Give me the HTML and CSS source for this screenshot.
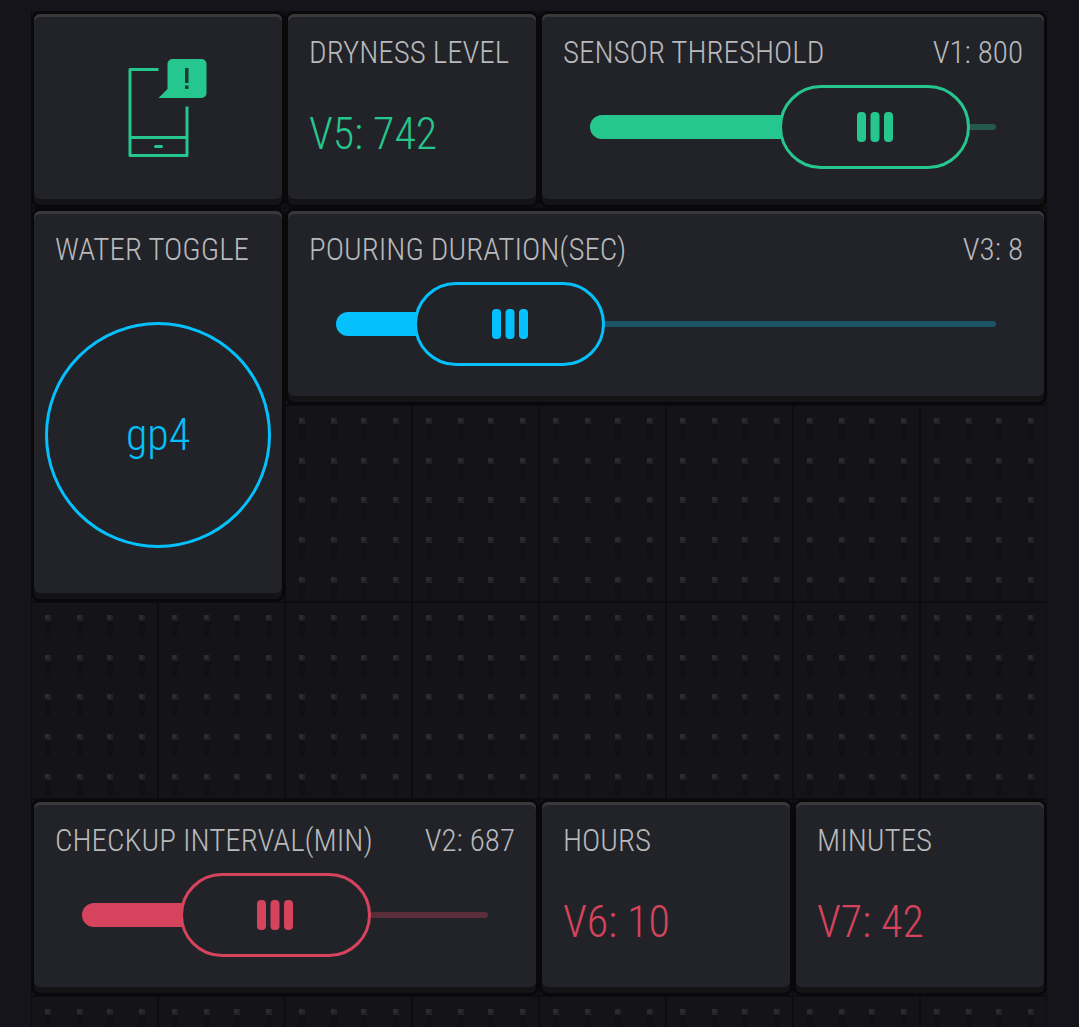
FILE: index.html
```html
<!DOCTYPE html>
<html lang="en">
<head>
<meta charset="utf-8">
<meta name="viewport" content="width=device-width, initial-scale=1">
<title>Plant watering</title>
<link rel="stylesheet" href="styles.css">
</head>
<body>
<main class="board">
  <section class="card card-icon green span-2">
    <svg class="notify-icon" viewBox="0 0 100 100" role="img" aria-label="Notification">
      <g fill="none" stroke="currentColor" stroke-width="3" stroke-linejoin="round">
        <path d="M50.500 12.500H22V98.500H79V49.500"/>
        <path d="M22 80.500H79"/>
        <path d="M47.500 89.500H53.500" stroke-linecap="round"/>
      </g>
      <path fill="currentColor" d="M64.500 2H93.500a5 5 0 0 1 5 5V36a5 5 0 0 1-5 5H50.500L59.500 32V7a5 5 0 0 1 5-5z"/>
      <path class="notify-mark" d="M77 11h3.500v15h-3.500zM77 28.500h3.500v3.500h-3.500z"/>
    </svg>
  </section>

  <section class="card green span-2">
    <header class="card-head"><h2 class="title">DRYNESS LEVEL</h2></header>
    <p class="value">V5: 742</p>
  </section>

  <section class="card green span-4">
    <header class="card-head">
      <label class="title" for="threshold">SENSOR THRESHOLD</label>
      <output class="reading" for="threshold">V1: 800</output>
    </header>
    <div class="slider">
      <span class="slider-fill" style="width: 88%"></span>
      <input class="slider-input" id="threshold" type="range" min="0" max="910" value="800">
    </div>
  </section>

  <section class="card blue span-2 tall">
    <header class="card-head"><h2 class="title">WATER TOGGLE</h2></header>
    <button class="round-button" type="button">gp4</button>
  </section>

  <section class="card blue span-6">
    <header class="card-head">
      <label class="title" for="duration">POURING DURATION(SEC)</label>
      <output class="reading" for="duration">V3: 8</output>
    </header>
    <div class="slider">
      <span class="slider-fill" style="width: 17%"></span>
      <input class="slider-input" id="duration" type="range" min="0" max="48" value="8">
    </div>
  </section>

  <section class="card red span-4 last-row">
    <header class="card-head">
      <label class="title" for="interval">CHECKUP INTERVAL(MIN)</label>
      <output class="reading" for="interval">V2: 687</output>
    </header>
    <div class="slider">
      <span class="slider-fill" style="width: 46%"></span>
      <input class="slider-input" id="interval" type="range" min="0" max="1510" value="687">
    </div>
  </section>

  <section class="card red span-2 last-row">
    <header class="card-head"><h2 class="title">HOURS</h2></header>
    <p class="value">V6: 10</p>
  </section>

  <section class="card red span-2 last-row">
    <header class="card-head"><h2 class="title">MINUTES</h2></header>
    <p class="value">V7: 42</p>
  </section>
</main>
</body>
</html>
```
FILE: styles.css
```css
* {
  box-sizing: border-box;
}

body {
  margin: 0;
  padding: 11px 32px 0 31px;
  background: #15141a;
  font-family: "Roboto Condensed", Roboto, "Liberation Sans", sans-serif;
  font-weight: 300;
  color: #b8b9bc;
}

/* Eight equal columns; the peg board repeats once per cell. */
.board {
  display: grid;
  grid-template-columns: repeat(8, 1fr);
  grid-auto-rows: 197px;
  align-content: start;
  min-height: calc(100vh - 11px);
  background-color: #141318;
  background-size: 12.5% 197px;
  background-image: url("data:image/svg+xml,%3Csvg xmlns='http://www.w3.org/2000/svg' xmlns:xlink='http://www.w3.org/1999/xlink' viewBox='0 0 127 197' preserveAspectRatio='none'%3E%3Cdefs%3E%3Cg id='p'%3E%3Crect width='6' height='22' fill='%23111014'/%3E%3Crect width='6' height='6' fill='%23222226'/%3E%3Crect width='4' height='4' fill='%232c2c2f'/%3E%3C/g%3E%3Cg id='r'%3E%3Cuse xlink:href='%23p' x='14'/%3E%3Cuse xlink:href='%23p' x='46'/%3E%3Cuse xlink:href='%23p' x='76'/%3E%3Cuse xlink:href='%23p' x='108'/%3E%3C/g%3E%3C/defs%3E%3Cuse xlink:href='%23r' y='13'/%3E%3Cuse xlink:href='%23r' y='53'/%3E%3Cuse xlink:href='%23r' y='92'/%3E%3Cuse xlink:href='%23r' y='132'/%3E%3Cuse xlink:href='%23r' y='172'/%3E%3Cpath d='M0 0h127v197H0z' fill='none' stroke='%230d0c10' stroke-width='2'/%3E%3C/svg%3E");
}

.span-2 { grid-column: span 2; }
.span-4 { grid-column: span 4; }
.span-6 { grid-column: span 6; }
.tall { grid-row: span 2; }
.last-row { grid-row: 5; }

.green {
  --accent: #26c68f;
  --rail: #25594c;
  --grip: url("data:image/svg+xml,%3Csvg xmlns='http://www.w3.org/2000/svg' width='36' height='30' fill='%2326c68f'%3E%3Crect width='9' height='30' rx='4'/%3E%3Crect x='13.500' width='9' height='30' rx='4'/%3E%3Crect x='27' width='9' height='30' rx='4'/%3E%3C/svg%3E");
}

.blue {
  --accent: #04c0fc;
  --rail: #1d5366;
  --grip: url("data:image/svg+xml,%3Csvg xmlns='http://www.w3.org/2000/svg' width='36' height='30' fill='%2304c0fc'%3E%3Crect width='9' height='30' rx='4'/%3E%3Crect x='13.500' width='9' height='30' rx='4'/%3E%3Crect x='27' width='9' height='30' rx='4'/%3E%3C/svg%3E");
}

.red {
  --accent: #d5435c;
  --rail: #592d3a;
  --grip: url("data:image/svg+xml,%3Csvg xmlns='http://www.w3.org/2000/svg' width='36' height='30' fill='%23d5435c'%3E%3Crect width='9' height='30' rx='4'/%3E%3Crect x='13.500' width='9' height='30' rx='4'/%3E%3Crect x='27' width='9' height='30' rx='4'/%3E%3C/svg%3E");
}

.card {
  display: flex;
  flex-direction: column;
  margin: 3px 3px 9px;
  padding: 21px 21px 0;
  border-radius: 6px;
  background: #222328;
  box-shadow:
    inset 0 3px 0 #39393c,
    0 6px 0 #141416,
    0 0 0 3px #09090c,
    0 6px 0 3px #09090c;
}

.card-head {
  display: flex;
  justify-content: space-between;
  font-size: 31px;
  line-height: 36px;
  white-space: nowrap;
}

.title {
  margin: 0;
  font-size: inherit;
  font-weight: inherit;
}

.value {
  margin: 39px 0 0;
  font-size: 44px;
  line-height: 48px;
  color: var(--accent);
}

.card-icon {
  align-items: center;
  justify-content: center;
  padding: 0;
}

.notify-icon {
  width: 100px;
  height: 100px;
  color: var(--accent);
}

.notify-mark {
  fill: #1b3a33;
}

/* Rail, filled portion and range input share one grid cell. */
.slider {
  display: grid;
  align-items: center;
  margin: 14px 27px 0;
}

.slider::before {
  content: "";
  grid-area: 1 / 1;
  height: 6px;
  border-radius: 3px;
  background: var(--rail);
}

.slider-fill,
.slider-input {
  grid-area: 1 / 1;
}

.slider-fill {
  height: 24px;
  border-radius: 12px;
  background: var(--accent);
}

.slider-input {
  appearance: none;
  width: 100%;
  height: 84px;
  margin: 0;
  background: none;
}

.slider-input::-webkit-slider-thumb {
  appearance: none;
  box-sizing: border-box;
  width: 191px;
  height: 84px;
  border: 3px solid var(--accent);
  border-radius: 42px;
  background: #222328 var(--grip) center no-repeat;
}

.slider-input::-moz-range-thumb {
  box-sizing: border-box;
  width: 191px;
  height: 84px;
  border: 3px solid var(--accent);
  border-radius: 42px;
  background: #222328 var(--grip) center no-repeat;
}

.round-button {
  aspect-ratio: 1;
  margin: 54px -10px 0;
  padding: 0;
  border: 3px solid var(--accent);
  border-radius: 50%;
  background: none;
  font: inherit;
  font-size: 44px;
  color: var(--accent);
}
```
